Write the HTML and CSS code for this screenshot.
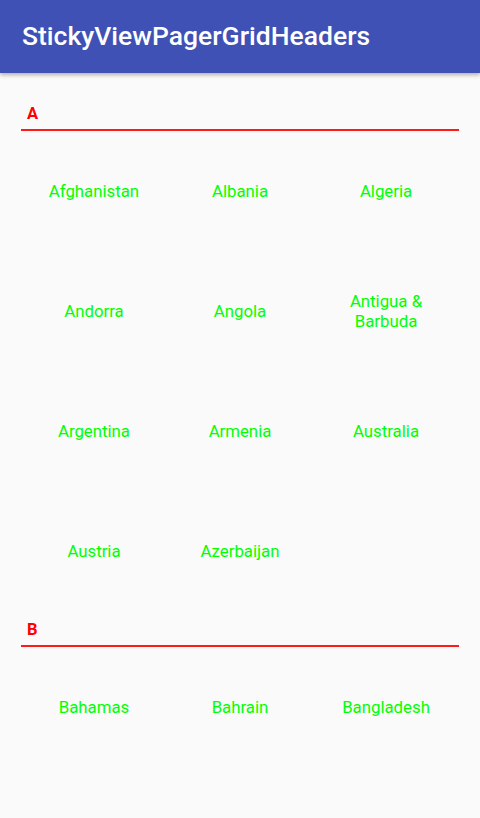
FILE: index.html
```html
<!DOCTYPE html>
<html>
<head>
<meta charset="utf-8">
<link rel="stylesheet" href="styles.css">
</head>
<body>
<header class="appbar"><h1 class="title">StickyViewPagerGridHeaders</h1></header>
<main class="content">
  <section class="group">
    <div class="group-header">A</div>
    <div class="grid">
      <div class="cell">Afghanistan</div>
      <div class="cell">Albania</div>
      <div class="cell">Algeria</div>
      <div class="cell">Andorra</div>
      <div class="cell">Angola</div>
      <div class="cell">Antigua &amp; Barbuda</div>
      <div class="cell">Argentina</div>
      <div class="cell">Armenia</div>
      <div class="cell">Australia</div>
      <div class="cell">Austria</div>
      <div class="cell">Azerbaijan</div>
    </div>
  </section>
  <section class="group">
    <div class="group-header">B</div>
    <div class="grid">
      <div class="cell">Bahamas</div>
      <div class="cell">Bahrain</div>
      <div class="cell">Bangladesh</div>
    </div>
  </section>
</main>
</body>
</html>
```
FILE: styles.css
```css
html, body {
  margin: 0;
  padding: 0;
  width: 480px;
  height: 818px;
  overflow: hidden;
  background: #fafafa;
  font-family: Roboto, "Liberation Sans", sans-serif;
}
.appbar {
  position: relative;
  z-index: 2;
  height: 73px;
  background: #3f51b5;
  box-shadow: 0 2px 4px rgba(0,0,0,0.3);
  display: flex;
  align-items: center;
  padding-left: 22px;
}
.title {
  margin: 0;
  color: #fff;
  font-size: 26.5px;
  font-weight: 500;
  letter-spacing: 0;
  line-height: 30px;
  padding-bottom: 1px;
}
.content {
  padding: 22px 21px 0 21px;
}
.group-header {
  padding: 9px 6px 6px;
  line-height: 19px;
  font-size: 16.5px;
  font-weight: 700;
  color: #ff0000;
  border-bottom: 2px solid #ff1a1a;
}
.grid {
  display: grid;
  grid-template-columns: repeat(3, 1fr);
  grid-auto-rows: 120px;
}
.cell {
  display: flex;
  align-items: center;
  justify-content: center;
  text-align: center;
  padding: 0 10px;
  color: #00ff00;
  font-size: 16.8px;
  line-height: 20px;
}
```
